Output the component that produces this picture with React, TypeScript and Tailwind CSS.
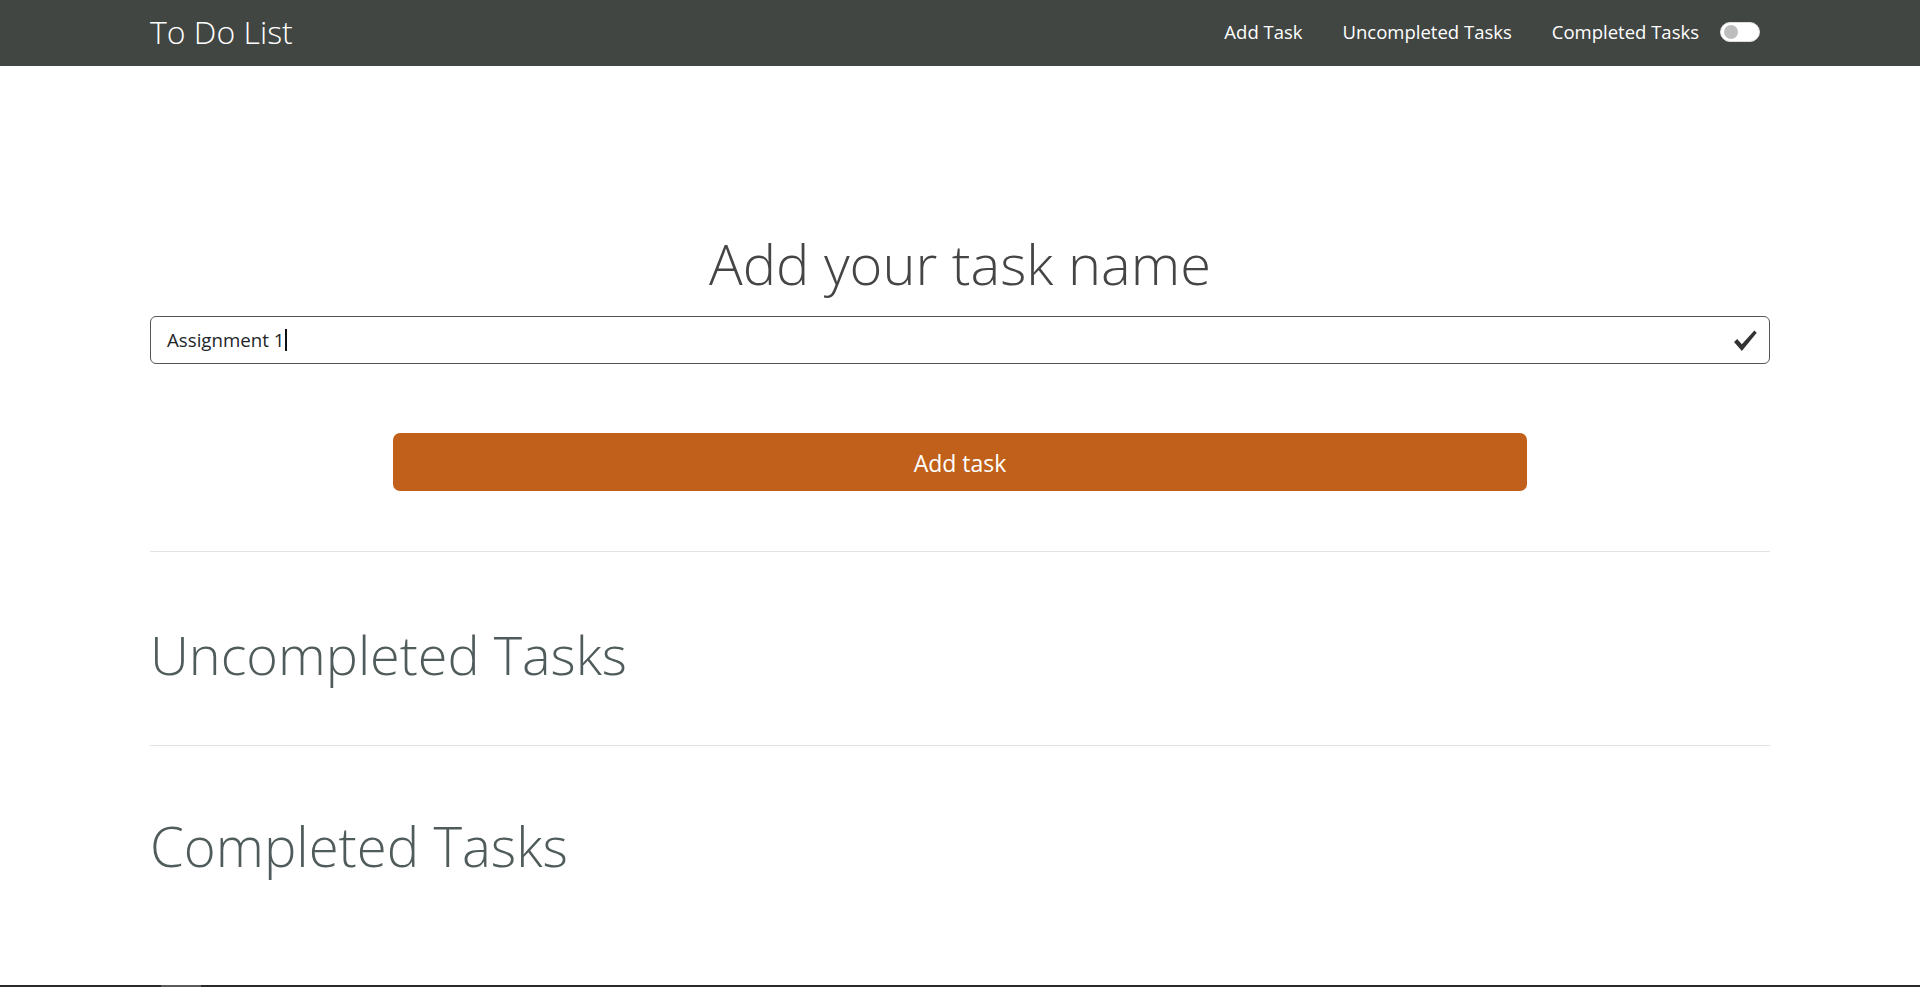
import React, { useState } from 'react';

const font = { fontFamily: '"Open Sans", "Liberation Sans", sans-serif' };

const CheckIcon: React.FC = () => (
  <svg width="25" height="25" viewBox="0 0 24 24" className="shrink-0">
    <path d="M1 13.5 L4 10.5 L8.5 15.5 L20.5 2.5 L22.8 4.6 L8.5 22 Z" fill="#333" />
  </svg>
);

const App: React.FC = () => {
  const [task] = useState('Assignment 1');

  return (
    <div className="h-[987px] flex flex-col bg-white" style={font}>
      {/* navbar */}
      <nav className="h-[66px] bg-[#414643] shrink-0">
        <div className="w-[1620px] mx-auto h-full flex items-center pr-[10px]">
          <a className="text-[32px] font-light text-white leading-none -mt-[3px]">To Do List</a>
          <div className="ml-auto flex items-center text-[18.5px] text-white -mt-[2px]">
            <a>Add Task</a>
            <a className="ml-[40px]">Uncompleted Tasks</a>
            <a className="ml-[40px]">Completed Tasks</a>
            <div className="ml-[21px] w-[40px] h-[20px] rounded-full bg-white border border-[#ddd] flex items-center px-[3px]">
              <div className="w-[14px] h-[14px] rounded-full bg-[#bdbdbd]" />
            </div>
          </div>
        </div>
      </nav>

      <main className="w-[1620px] mx-auto">
        <h1 className="mt-[164px] text-center text-[56px] font-light leading-[1.2] text-[#454545]">
          Add your task name
        </h1>

        <div className="mt-[19px] h-[48px] border border-[#555] rounded-[6px] flex items-center pl-[16px] pr-[11px]">
          <span className="text-[18.7px] text-[#212529]">{task}</span>
          <span className="w-[2px] h-[22px] bg-[#111] ml-[1px]" />
          <span className="ml-auto flex">
            <CheckIcon />
          </span>
        </div>

        <div className="flex justify-center mt-[69px]">
          <button className="w-[1134px] h-[58px] bg-[#c0601a] rounded-[7px] text-white text-[23px] pt-[2px]">
            Add task
          </button>
        </div>

        <hr className="mt-[60px] border-0 h-px bg-[#e2e2e2]" />

        <h2 className="mt-[70px] text-[54px] font-light leading-[1.2] text-[#505c5b]">Uncompleted Tasks</h2>

        <hr className="mt-[58px] border-0 h-px bg-[#e2e2e2]" />

        <h2 className="mt-[68px] text-[54.5px] font-light leading-[1.2] text-[#505c5b]">Completed Tasks</h2>
      </main>

      <div className="mt-auto h-[2px] bg-[#2a2a2a] shrink-0 flex">
        <div className="ml-[161px] w-[40px] h-full bg-[#5a5a5a]" />
      </div>
    </div>
  );
};

export default App;
